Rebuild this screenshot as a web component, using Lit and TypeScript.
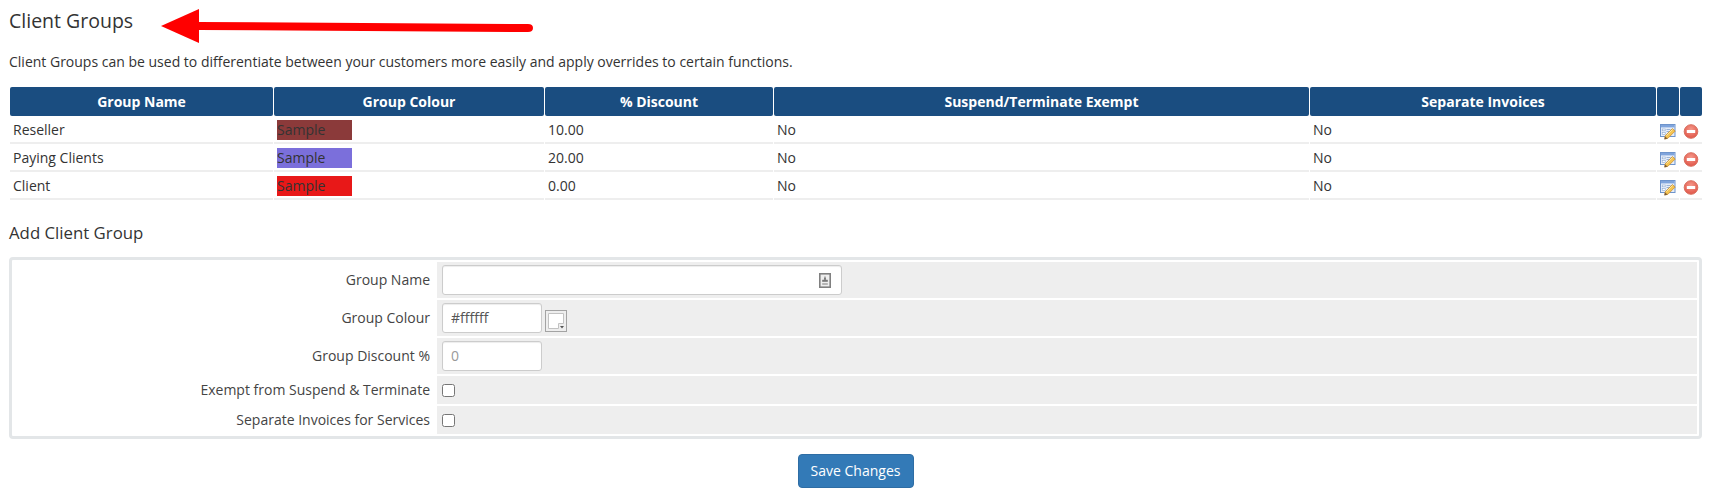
import { LitElement, html, css, svg } from "lit";
import { customElement } from "lit/decorators.js";

const rows = [
  { name: "Reseller", color: "#8b3a3a", discount: "10.00" },
  { name: "Paying Clients", color: "#7b6fdb", discount: "20.00" },
  { name: "Client", color: "#e81818", discount: "0.00" },
];

const editIcon = svg`<svg class="ico" width="16" height="16" viewBox="0 0 16 16">
  <rect x="0.5" y="0.5" width="14.5" height="12" fill="#e6eefa" stroke="#6e94cc"/>
  <rect x="1" y="1" width="13.5" height="2.4" fill="#7fa4dc"/>
  <rect x="2.2" y="5" width="3" height="1.8" fill="#fff" stroke="#8fa9cf" stroke-width="0.6"/>
  <rect x="2.2" y="8.6" width="3" height="1.8" fill="#fff" stroke="#8fa9cf" stroke-width="0.6"/>
  <path d="M6.5 5.5h4M6.5 7.5h2.5" stroke="#9db4d6" stroke-width="1"/>
  <path d="M5 12 L12.4 4.6 L15.2 7 L8 14.2 L5 15Z" fill="#f5c452" stroke="#c98f33" stroke-width="0.8"/>
  <path d="M6.4 11.6 L12.6 5.4" stroke="#fbe9a6" stroke-width="1"/>
  <path d="M4.2 15.6 L5 12.6 L7.6 14.6Z" fill="#7a5a33"/>
</svg>`;

const delIcon = svg`<svg class="ico" width="16" height="16" viewBox="0 0 16 16">
  <defs><radialGradient id="rg" cx="50%" cy="35%" r="70%"><stop offset="0" stop-color="#f59a8c"/><stop offset="1" stop-color="#df4f42"/></radialGradient></defs>
  <circle cx="8" cy="7.5" r="6.8" fill="url(#rg)" stroke="#d8705f"/>
  <rect x="3.8" y="6.1" width="8.4" height="2.8" rx="0.5" fill="#fff"/>
</svg>`;

const lockIcon = svg`<svg width="12" height="15" viewBox="0 0 12 15">
  <rect x="0.8" y="0.8" width="10.4" height="13.4" fill="#eee" stroke="#808080" stroke-width="1.6"/>
  <path d="M6 2.8 L7.2 6.8 H4.8Z" fill="#666"/>
  <rect x="3.2" y="6.8" width="5.6" height="2" fill="#777"/>
  <rect x="3.2" y="10" width="5.6" height="2" fill="#b5b5b5"/>
</svg>`;

const pickerIcon = svg`<svg class="picker" width="22" height="22" viewBox="0 0 22 22">
  <rect x="0.5" y="0.5" width="21" height="21" fill="#eee" stroke="#a3a3a3"/>
  <path d="M3.5 3.5 H18.5 V13.5 H13.5 V18.5 H3.5Z" fill="#fff" stroke="#c2c2c2"/>
  <path d="M15 16 H19 L17 18.5Z" fill="#555"/>
</svg>`;

@customElement("app-root")
export class AppRoot extends LitElement {
  static styles = css`
    :host {
      display: block;
      box-sizing: border-box;
      width: 1715px;
      height: 496px;
      background: #fff;
      padding: 0 9px;
      font-family: "Open Sans", "Liberation Sans", sans-serif;
      font-size: 14px;
      line-height: 20px;
      color: #333;
      overflow: hidden;
    }
    .title-row {
      position: relative;
      height: 43px;
    }
    h1 {
      margin: 0;
      padding-top: 8px;
      font-size: 19.5px;
      line-height: 26px;
      font-weight: 400;
    }
    .arrow {
      position: absolute;
      left: 143px;
      top: 0;
    }
    p {
      margin: 9px 0 13px;
      height: 21px;
      line-height: 20px;
    }
    table {
      width: 1694px;
      border-collapse: separate;
      border-spacing: 1px 1px;
      table-layout: fixed;
      margin: 0;
    }
    th {
      background: #1a4d80;
      color: #fff;
      height: 29px;
      padding: 0;
      font-weight: 700;
      text-align: center;
      border-radius: 2px;
    }
    td {
      height: 27px;
      padding: 0 0 0 3px;
      border-bottom: 2px solid #eee;
      box-sizing: border-box;
      vertical-align: middle;
    }
    td.icon {
      padding: 0;
      text-align: center;
    }
    .ico {
      display: block;
      margin: 5px auto 0;
    }
    .sample {
      display: block;
      width: 75px;
      height: 20px;
    }
    h2 {
      margin: 21px 0 13px;
      font-size: 16.8px;
      line-height: 22px;
      font-weight: 400;
    }
    .form {
      box-sizing: border-box;
      width: 1693px;
      border: 3px solid #e3e6e8;
      border-radius: 4px;
      padding: 2px;
      display: grid;
      grid-template-columns: 423px 1fr;
      row-gap: 2px;
    }
    .lab {
      padding-right: 7px;
      display: flex;
      align-items: center;
      justify-content: flex-end;
      height: 36px;
      color: #444;
    }
    .lab.short, .fld.short { height: 28px; }
    .fld {
      background: #eee;
      height: 36px;
      display: flex;
      align-items: center;
      padding-left: 5px;
      gap: 3px;
    }
    .input {
      box-sizing: border-box;
      height: 30px;
      background: #fff;
      border: 1px solid #ccc;
      border-radius: 3px;
      padding: 0 10px 0 8px;
      display: flex;
      align-items: center;
      justify-content: space-between;
      box-shadow: inset 0 1px 1px rgba(0,0,0,.075);
      color: #555;
    }
    .w400 { width: 400px; }
    .w100 { width: 100px; }
    .input.ph { color: #999; }
    .picker {
      display: block;
      margin-top: 6px;
    }
    input[type="checkbox"] {
      width: 13px;
      height: 13px;
      margin: 0;
    }
    .actions {
      display: flex;
      justify-content: center;
      width: 1693px;
      margin-top: 15px;
    }
    button {
      box-sizing: border-box;
      width: 116px;
      height: 34px;
      background: #337ab7;
      border: 1px solid #2e6da4;
      border-radius: 4px;
      color: #fff;
      font: inherit;
      padding: 0;
    }
  `;

  render() {
    return html`
      <div class="title-row">
        <h1>Client Groups</h1>
        <svg class="arrow" width="390" height="50" viewBox="0 0 390 50">
          <path d="M47 22 L376 24 Q381 24.2 381 28 Q381 32 376 32 L47 30 Z" fill="#ff0000"/>
          <path d="M9 26 L47 9 L47 43 Z" fill="#ff0000"/>
        </svg>
      </div>
      <p>Client Groups can be used to differentiate between your customers more easily and apply overrides to certain functions.</p>
      <table>
        <colgroup>
          <col style="width:263px" /><col style="width:270px" /><col style="width:228px" />
          <col style="width:535px" /><col style="width:346px" /><col style="width:22px" /><col style="width:22px" />
        </colgroup>
        <thead>
          <tr>
            <th>Group Name</th><th>Group Colour</th><th>% Discount</th>
            <th>Suspend/Terminate Exempt</th><th>Separate Invoices</th><th></th><th></th>
          </tr>
        </thead>
        <tbody>
          ${rows.map(
            (r) => html`<tr>
              <td>${r.name}</td>
              <td><span class="sample" style="background:${r.color}">Sample</span></td>
              <td>${r.discount}</td>
              <td>No</td>
              <td>No</td>
              <td class="icon">${editIcon}</td>
              <td class="icon">${delIcon}</td>
            </tr>`
          )}
        </tbody>
      </table>
      <h2>Add Client Group</h2>
      <div class="form">
        <div class="lab">Group Name</div>
        <div class="fld"><div class="input w400"><span></span>${lockIcon}</div></div>
        <div class="lab">Group Colour</div>
        <div class="fld"><div class="input w100">#ffffff</div>${pickerIcon}</div>
        <div class="lab">Group Discount %</div>
        <div class="fld"><div class="input w100 ph">0</div></div>
        <div class="lab short">Exempt from Suspend &amp; Terminate</div>
        <div class="fld short"><input type="checkbox" /></div>
        <div class="lab short">Separate Invoices for Services</div>
        <div class="fld short"><input type="checkbox" /></div>
      </div>
      <div class="actions"><button>Save Changes</button></div>
    `;
  }
}
